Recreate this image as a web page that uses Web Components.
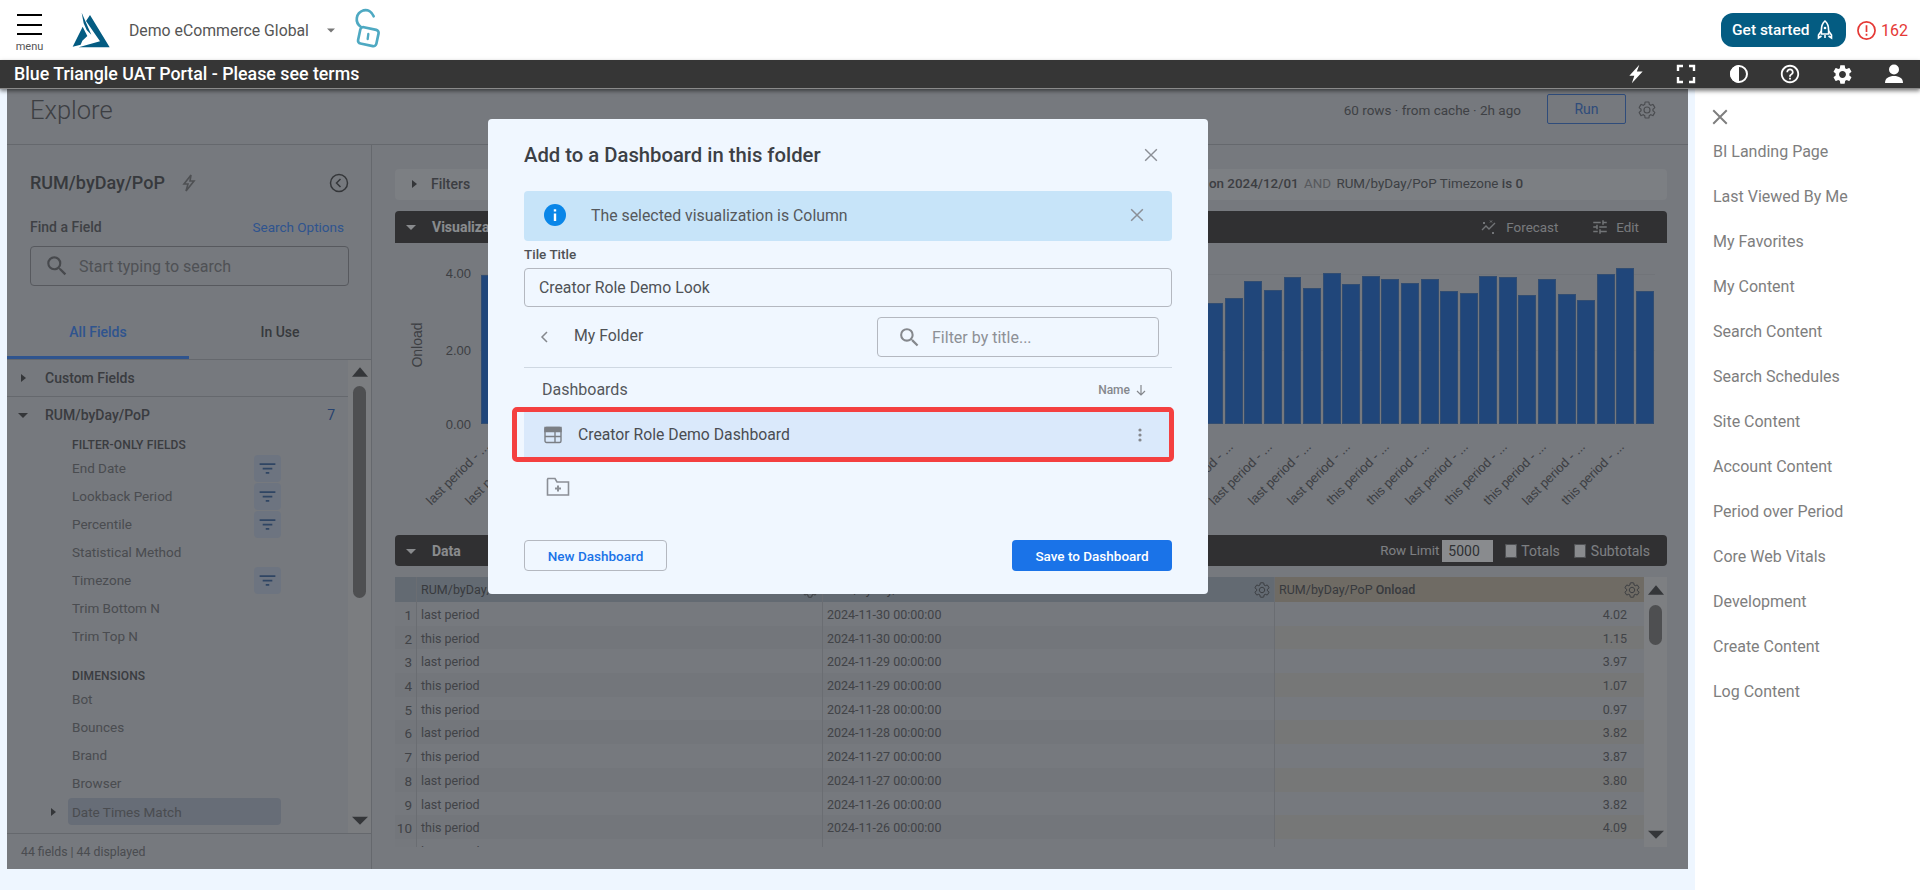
<!DOCTYPE html>
<html lang="en">
<head>
<meta charset="utf-8">
<title>Add to a Dashboard</title>
<style>
html,body{margin:0;padding:0;height:890px;overflow:hidden;background:#eef6ff;font-family:Roboto,"Liberation Sans",sans-serif}
.main{display:flex;height:801px}
</style>
</head>
<body>
<app-header></app-header>
<app-banner></app-banner>
<div class="main">
  <explore-pane></explore-pane>
  <side-nav></side-nav>
</div>
<script>
const P={
 search:'M15.5 14h-.79l-.28-.27A6.47 6.47 0 0 0 16 9.5 6.5 6.5 0 1 0 9.5 16c1.61 0 3.09-.59 4.23-1.57l.27.28v.79l5 4.99L20.49 19l-4.99-5zm-6 0C7.01 14 5 11.99 5 9.5S7.01 5 9.5 5 14 7.01 14 9.5 11.99 14 9.5 14z',
 gear:'M19.14 12.94c.04-.3.06-.61.06-.94 0-.32-.02-.64-.07-.94l2.03-1.58c.18-.14.23-.41.12-.61l-1.92-3.32c-.12-.22-.37-.29-.59-.22l-2.39.96c-.5-.38-1.03-.7-1.62-.94l-.36-2.54c-.04-.24-.24-.41-.48-.41h-3.84c-.24 0-.43.17-.47.41l-.36 2.54c-.59.24-1.13.57-1.62.94l-2.39-.96c-.22-.08-.47 0-.59.22L2.74 8.87c-.12.21-.08.47.12.61l2.03 1.58c-.05.3-.09.63-.09.94s.02.64.07.94l-2.03 1.58c-.18.14-.23.41-.12.61l1.92 3.32c.12.22.37.29.59.22l2.39-.96c.5.38 1.03.7 1.62.94l.36 2.54c.05.24.24.41.48.41h3.84c.24 0 .44-.17.47-.41l.36-2.54c.59-.24 1.13-.56 1.62-.94l2.39.96c.22.08.47 0 .59-.22l1.92-3.32c.12-.22.07-.47-.12-.61l-2.01-1.58zM12 15.6c-1.98 0-3.6-1.62-3.6-3.6s1.62-3.6 3.6-3.6 3.6 1.62 3.6 3.6-1.62 3.6-3.6 3.6z',
 help:'M11 18h2v-2h-2v2zm1-16C6.48 2 2 6.48 2 12s4.48 10 10 10 10-4.48 10-10S17.52 2 12 2zm0 18c-4.41 0-8-3.59-8-8s3.59-8 8-8 8 3.59 8 8-3.59 8-8 8zm0-14c-2.21 0-4 1.79-4 4h2c0-1.1.9-2 2-2s2 .9 2 2c0 2-3 1.75-3 5h2c0-2.25 3-2.5 3-5 0-2.21-1.79-4-4-4z',
 tune:'M3 17v2h6v-2H3zM3 5v2h10V5H3zm10 16v-2h8v-2h-8v-2h-2v6h2zM7 9v2H3v2h4v2h2V9H7zm14 4v-2H11v2h10zm-6-4h2V7h4V5h-4V3h-2v6z',
 filter:'M3 6h18v2H3zM6.5 11h11v2h-11zM10 16h4v2h-4z'
};
const svg=(p,s,c,extra='')=>`<svg width="${s}" height="${s}" viewBox="0 0 24 24" fill="${c}" ${extra}><path d="${p}"/></svg>`;
const stroke=(p,s,c,w=2,extra='')=>`<svg width="${s}" height="${s}" viewBox="0 0 24 24" fill="none" stroke="${c}" stroke-width="${w}" ${extra}><path d="${p}"/></svg>`;
const caret=(dir,c,s=10)=>{
  const d=dir==='r'?'M3 1l5 4-5 4z':dir==='u'?'M0 8L5 2l5 6z':'M0 3h10L5 8z';
  return `<svg width="${s}" height="${s}" viewBox="0 0 10 10" fill="${c}"><path d="${d}"/></svg>`;
};
class Base extends HTMLElement{
  constructor(){super();this.attachShadow({mode:'open'}).innerHTML=`<style>${this.css()}</style>${this.html()}`;}
  css(){return ''}
  html(){return ''}
}

customElements.define('app-header',class extends Base{
 css(){return `:host{display:flex;align-items:center;height:60px;background:#fff;padding:0 12px 0 16px;box-sizing:border-box;font-family:Roboto,sans-serif}
 .burger{width:27px;display:flex;flex-direction:column;align-items:center;margin-top:8px}
 .lines{width:25px;height:21px;border-top:2px solid #000;border-bottom:2px solid #000;box-sizing:border-box}
 .lines i{display:block;height:2px;background:#000;margin-top:7.5px}
 .burger span{font-size:11px;line-height:14px;color:#555;margin-top:5px}
 .logo{margin-left:23px;width:50px;height:48px;display:block}
 .name{font-size:15.800px;color:#555;margin-left:13px;width:198px;white-space:nowrap}
 .lock{margin-left:10px;display:block}
 .right{margin-left:auto;display:flex;align-items:center}
 .btn{height:34px;width:125px;box-sizing:border-box;border-radius:12px;background:#045c82;color:#fff;display:flex;align-items:center;padding-left:11px;gap:8px;font-size:15.500px;font-weight:500}
 .err{margin-left:11px;display:flex;align-items:center;gap:5px;color:#e53935;font-size:16px}`}
 html(){return `<div class="burger"><div class="lines"><i></i></div><span>menu</span></div>
 <svg class="logo" viewBox="0 0 150 144"><path fill="#045c82" d="M20 122L50 62 64 90 49 104 44 116zM60 45L72 27 131 124 38 124 102 106zM47 20L76 86 62 72 53 52z"/></svg>
 <div class="name">Demo eCommerce Global</div>
 ${caret('d','#777',8)}
 <svg class="lock" width="45" height="50" viewBox="0 0 135 150" fill="none" stroke="#4ea9c2" stroke-width="8" stroke-linecap="round"><rect x="42" y="70" width="56" height="50" rx="9" transform="rotate(12 70 95)"/><path d="M48 66C28 52 32 24 56 16c12-3 24 4 30 18"/><path d="M70 87l-2 15" stroke-width="7"/></svg>
 <div class="right"><div class="btn"><span>Get started</span>
 <svg width="16" height="20" viewBox="0 0 16 20" fill="none" stroke="#fff" stroke-width="1.600"><path d="M8 1c3 2.500 3.600 6 3.600 9v4H4.400V10C4.400 7 5 3.500 8 1z"/><path d="M4.400 11L1.500 15v3l3-2M11.600 11l2.900 4v3l-3-2"/><circle cx="8" cy="8" r="1.300" fill="#fff" stroke="none"/><path d="M8 15v3"/></svg></div>
 <div class="err"><svg width="19" height="19" viewBox="0 0 20 20" fill="none" stroke="#e53935" stroke-width="1.800"><circle cx="10" cy="10" r="9"/><path d="M10 4.500v7M10 13.500v2"/></svg><span>162</span></div></div>`}
});

customElements.define('app-banner',class extends Base{
 css(){return `:host{display:flex;align-items:center;height:29px;box-sizing:border-box;background:#363636;color:#fff;position:relative;z-index:3;box-shadow:0 2px 4px rgba(0,0,0,.5);border-bottom:1px solid #8a8a8a;font-family:Roboto,sans-serif}
 .t{font-size:17.800px;font-weight:500;padding-left:14px;white-space:nowrap;margin-top:-1px}
 .i{margin-left:auto;display:flex}.i div{width:52px;display:flex;justify-content:center;align-items:center;height:28px}`}
 html(){return `<div class="t">Blue Triangle UAT Portal - Please see terms</div><div class="i">
 <div><svg width="20" height="20" viewBox="0 0 24 24" fill="#fff" style="margin-left:3px"><path d="M16 1L4 14h6l-3 9 13-14h-7z"/></svg></div>
 <div><svg width="20" height="20" viewBox="0 0 20 20" fill="none" stroke="#fff" stroke-width="2.400"><path d="M7 2H2v5M13 2h5v5M7 18H2v-5M13 18h5v-5"/></svg></div>
 <div><svg width="20" height="20" viewBox="0 0 20 20" style="margin-left:1px"><circle cx="10" cy="10" r="8" fill="#363636" stroke="#fff" stroke-width="2"/><path fill="#fff" d="M10 1a9 9 0 0 0 0 18z"/></svg></div>
 <div>${svg(P.help,22,'#fff')}</div>
 <div>${svg(P.gear,23,'#fff')}</div>
 <div><svg width="20" height="20" viewBox="0 0 20 20" fill="#fff"><circle cx="10" cy="5.500" r="5"/><path d="M1 19c0-5 4-7 9-7s9 2 9 7z"/></svg></div>
 </div>`}
});

customElements.define('side-nav',class extends Base{
 css(){return `:host{display:block;width:225px;background:#fff;margin-left:7px;padding:21px 0 0 18px;box-sizing:border-box;color:#7e7e7e;font-family:Roboto,sans-serif}
 svg{display:block;margin:-2px 0 2.500px -2px}
 div{font-size:16px;line-height:45.050px;white-space:nowrap}`}
 html(){return stroke('M3 3l18 18M21 3L3 21',18,'#7e7e7e',2.600)+['BI Landing Page','Last Viewed By Me','My Favorites','My Content','Search Content','Search Schedules','Site Content','Account Content','Period over Period','Core Web Vitals','Development','Create Content','Log Content'].map(t=>`<div>${t}</div>`).join('')}
});

customElements.define('field-picker',class extends Base{
 css(){return `:host{display:flex;flex-direction:column;width:365px;height:724px;box-sizing:border-box;border-right:1px solid #b6b8bc;color:#646466;font-family:Roboto,sans-serif;flex:none}
 .top{padding:25px 23px 0}
 .title{display:flex;align-items:center;font-size:18px;font-weight:500;line-height:26px;color:#5a5a5c}
 .title svg:first-of-type{margin-left:17px}.title svg:last-of-type{margin-left:auto;margin-right:-1px}
 .find{display:flex;justify-content:space-between;font-size:14px;line-height:18px;margin-top:22px;font-weight:500;color:#6a6a6c}
 .find a{color:#4a90ff;font-weight:400;margin-right:4px;font-size:13.500px}
 .sb{box-sizing:border-box;height:40px;width:319px;border:1px solid #9a9a9e;border-radius:4px;margin-top:10px;display:flex;align-items:center;padding-left:13px;gap:9px;font-size:16px;color:#8a8a8c}
 .tabs{display:flex;height:53px;margin-top:20px;border-bottom:1px solid #b6b8bc;font-size:14px;font-weight:500;text-align:center;line-height:52px}
 .tabs div{width:182px;box-sizing:border-box;height:53px}
 .tabs .on{color:#4a90ff;border-bottom:3px solid #4a90ff}
 .tabs .off{color:#5a5a5c}
 .mid{flex:1;min-height:0;display:flex}
 .list{flex:1;overflow:hidden;font-size:13.500px;color:#808082}
 .grp{display:flex;align-items:center;font-weight:500;font-size:14px;color:#606062;position:relative;padding-left:38px}
 .grp svg{position:absolute;left:11px}
 .g1{height:36px;border-bottom:1px solid #b6b8bc}
 .g2{height:36px}
 .g2 b{margin-left:auto;margin-right:13px;color:#3a6cc0;font-weight:400}
 .lab{margin-left:65px;font-size:12px;font-weight:500;line-height:18px;color:#606062;letter-spacing:.15px;display:flex;align-items:flex-end}
 .row{margin-left:61px;width:213px;height:28px;display:flex;align-items:center;justify-content:space-between;padding-left:4px;box-sizing:border-box;position:relative;border-radius:4px}
 .row.hl{height:27px;background:#bac2d0;margin-top:1px}
 .row.hl svg{position:absolute;left:-20px}
 .fb{width:27px;height:27px;border-radius:4px;background:#c6d0e2;display:flex;align-items:center;justify-content:center}
 .sc{width:23px;background:#e2e2e2;display:flex;flex-direction:column;align-items:center}
 .sc .th{width:13px;height:212px;background:#888684;border-radius:7px;margin-top:12px}
 .sc .u{margin-top:4px;height:10px}.sc .d{margin-top:auto;margin-bottom:11px;height:10px}
 .foot{height:36px;border-top:1px solid #b6b8bc;font-size:12.300px;display:flex;align-items:center;padding-left:14px;box-sizing:border-box;color:#808082}`}
 html(){
  const fb=`<div class="fb">${svg(P.filter,21,'#4a72a8')}</div>`;
  const r=(t,f)=>`<div class="row"><span>${t}</span>${f?fb:''}</div>`;
  return `<div class="top"><div class="title"><span>RUM/byDay/PoP</span>
  <svg width="14" height="18" viewBox="0 0 14 18" fill="none" stroke="#888" stroke-width="1.600"><path d="M9 1L2 10h4l-2 7 8-10H8z"/></svg>
  <svg width="20" height="20" viewBox="0 0 20 20" fill="none" stroke="#555" stroke-width="1.500"><circle cx="10" cy="10" r="8.500"/><path d="M11.500 6l-4 4 4 4"/></svg></div>
  <div class="find"><span>Find a Field</span><a>Search Options</a></div>
  <div class="sb">${svg(P.search,26,'#7a7a7c')}<span>Start typing to search</span></div></div>
  <div class="tabs"><div class="on">All Fields</div><div class="off">In Use</div></div>
  <div class="mid"><div class="list">
   <div class="grp g1">${caret('r','#555')}Custom Fields</div>
   <div class="grp g2">${caret('d','#555')}RUM/byDay/PoP<b>7</b></div>
   <div class="lab" style="height:21px">FILTER-ONLY FIELDS</div>
   ${r('End Date',1)}${r('Lookback Period',1)}${r('Percentile',1)}${r('Statistical Method')}${r('Timezone',1)}${r('Trim Bottom N')}${r('Trim Top N')}
   <div class="lab" style="height:35px">DIMENSIONS</div>
   ${r('Bot')}${r('Bounces')}${r('Brand')}${r('Browser')}
   <div class="row hl">${caret('r','#555')}<span>Date Times Match</span></div>
  </div>
  <div class="sc"><div class="u">${caret('u','#555',16)}</div><div class="th"></div><div class="d">${caret('d','#555',16)}</div></div></div>
  <div class="foot">44 fields | 44 displayed</div>`}
});

customElements.define('viz-panel',class extends Base{
 css(){return `:host{display:block;height:324px;font-family:Roboto,sans-serif}
 .bar{height:32px;background:#4c4846;border-radius:4px 4px 0 0;display:flex;align-items:center;color:#e6e6e6;font-size:14px;padding-left:11px}
 .bar b{font-weight:700;margin-left:16px;color:#fff}
 .act{margin-left:auto;display:flex;align-items:center;margin-right:28px;color:#dcdcdc;font-size:13.400px}
 .act svg{margin-right:7px}.act span+svg{margin-left:33px}
 .chart{display:flex;padding-top:31px;font-family:"Liberation Sans",sans-serif;color:#666668;font-size:13px}
 .yl{width:43px;height:141px;display:flex;align-items:center;justify-content:center;font-size:14px}
 .yl span{transform:rotate(-90deg);display:block}
 .ticks{width:33px;height:167px;margin-top:-8px;margin-right:9px;display:flex;flex-direction:column;justify-content:space-between;align-items:flex-end;line-height:16px}
 .ticks span:nth-child(2){margin-top:2px}
 .area{width:1175px}
 .plot{height:149px;display:flex;align-items:flex-end;border-top:1px solid #cfd1d5;background:linear-gradient(#cfd1d5,#cfd1d5) 0 75px/100% 1px no-repeat}
 .plot i{flex:1;margin:0 .8px;background:#2c74d6;box-shadow:inset 0 0 0 1px #5182c4;display:block}
 .xa{display:flex;margin:15px 0 0 -38px}
 .xa div{flex:none;width:39.160px;display:flex;justify-content:flex-end;height:20px}
 .xa span{flex:none;white-space:nowrap;transform-origin:100% 0;transform:rotate(-45deg)}`}
 html(){
  const tops=[290,267.3,273,299,293.3,277.7,294.3,276.3,275.3,292,290,277.7,282,277.7,275.3,283.3,272,286.7,276.3,289,280,296.7,302.3].reverse();
  const h=[];for(let i=0;i<60;i++){h.push(i===0?149:i<37?118:423-tops[i-37]);}
  const labs=['last','last','this','last','this','last','this','last','this','this','last','this','last','this','last','this','last','this','last','last','last','last','last','this','this','last','this','this','last','this'];
  return `<div class="bar">${caret('d','#fff')}<b>Visualization</b>
  <div class="act"><svg width="16" height="16" viewBox="0 0 16 16" fill="none" stroke="#d0d0d0" stroke-width="1.400" style="margin-right:9px"><path d="M1 11l4-4 3 3 6-6"/><path d="M2 3l2 2M4 3L2 5M9 1.500l2 2M11 1.500l-2 2M11 13l2 2M13 13l-2 2" stroke-width="1"/></svg><span>Forecast</span>${svg(P.tune,18,'#d0d0d0')}<span>Edit</span></div></div>
  <div class="chart"><div class="yl"><span>Onload</span></div><div class="ticks"><span>4.00</span><span>2.00</span><span>0.00</span></div>
  <div class="area"><div class="plot">${h.map(v=>`<i style="height:${v}px"></i>`).join('')}</div>
  <div class="xa">${labs.map(l=>`<div><span>${l} period - ...</span></div>`).join('')}</div></div></div>`}
});

customElements.define('data-panel',class extends Base{
 css(){return `:host{display:block;font-family:Roboto,sans-serif}
 .bar{height:31px;background:#4c4846;border-radius:4px;display:flex;align-items:center;color:#e6e6e6;font-size:14px;padding-left:11px}
 .bar b{font-weight:700;margin-left:16px;color:#fff}
 .act{margin-left:auto;display:flex;align-items:center;margin-right:17px}
 .rl{font-size:13.400px}
 .inp{width:51px;height:22px;background:#fff;color:#4a4a4a;margin:0 12px 0 3px;padding-left:6px;box-sizing:border-box;line-height:22px}
 .cb{width:12px;height:14px;border-radius:2px;background:#fff;margin-right:5px;box-shadow:inset 0 0 0 1px #888}
 .inp+.cb{margin-right:4px}
 .act span+.cb{margin-left:14px}
 .tbl{display:flex;margin-top:11px;height:270px;overflow:hidden}
 .t{width:1249px;font-size:12.500px;color:#6e6e70}
 .r{display:grid;grid-template-columns:22px 406px 452px 369px;height:23.700px;align-items:center}
 .r div{height:100%;line-height:26.700px;box-sizing:border-box;padding-left:4px;border-right:1px solid #c0c2c6;white-space:nowrap;overflow:hidden}
 .r div:first-child{text-align:right;padding:0 4px 0 0;font-size:13.500px;background:#d6d8dc}
 .r div:last-child{text-align:right;padding-right:17px;border:0}
 .r:nth-child(odd) div{background:#d2d4d8}
 .r:nth-child(odd) div:first-child{background:#d3d5d9}
 .r:nth-child(odd) div:last-child{background:#d9d6d1}
 .h{height:25px}
 .h div,.r.h:nth-child(odd) div{background:#b2bcc6;line-height:25px;position:relative;color:#5c5c5e;border-right:1px solid #c0c2c6}
 .h div:last-child,.r.h:nth-child(odd) div:last-child{background:#cabeaa;text-align:left;padding-left:4px;border:0}
 .h svg{position:absolute;right:3px;top:4px}
 .h b{font-weight:500}
 .sc{width:23px;background:#e6e6e6;display:flex;flex-direction:column;align-items:center;height:270px}
 .sc .u{margin-top:5px;height:16px}.sc .th{width:13px;height:40px;border-radius:7px;background:#888684;margin-top:7px}.sc .d{margin-top:auto;margin-bottom:5px;height:16px}`}
 html(){
  const g=stroke(P.gear,18,'#606062',1.300);
  const rows=[['last','11-30','4.02'],['this','11-30','1.15'],['last','11-29','3.97'],['this','11-29','1.07'],['this','11-28','0.97'],['last','11-28','3.82'],['this','11-27','3.87'],['last','11-27','3.80'],['last','11-26','3.82'],['this','11-26','4.09'],['last','11-25','3.97']];
  return `<div class="bar">${caret('d','#fff')}<b>Data</b><div class="act"><span class="rl">Row Limit</span><div class="inp">5000</div><div class="cb"></div><span>Totals</span><div class="cb"></div><span>Subtotals</span></div></div>
  <div class="tbl"><div class="t"><div class="r h"><div></div><div>RUM/byDay/PoP Period${g}</div><div>RUM/byDay/PoP Date Time${g}</div><div>RUM/byDay/PoP <b>Onload</b>${g}</div></div>
  ${rows.map((r,i)=>`<div class="r"><div>${i+1}</div><div>${r[0]} period</div><div>2024-${r[1]} 00:00:00</div><div>${r[2]}</div></div>`).join('')}</div>
  <div class="sc"><div class="u">${caret('u','#555',16)}</div><div class="th"></div><div class="d">${caret('d','#555',16)}</div></div></div>`}
});

customElements.define('add-dialog',class extends Base{
 css(){return `:host{display:flex;flex-direction:column;position:absolute;left:481px;top:30px;width:720px;height:475px;box-sizing:border-box;padding:0 36px 23px;background:#f0f7ff;border-radius:4px;color:#4a4d52;font-family:Roboto,sans-serif;z-index:2}
 .title{height:72px;flex:none;display:flex;align-items:center;justify-content:space-between;font-size:20.250px;font-weight:500;color:#3c4045;line-height:24px}
 .title svg{margin-right:11px}
 .info{height:50px;flex:none;box-sizing:border-box;padding:0 0 2px 20px;background:#c7e4f9;border-radius:4px;display:flex;align-items:center;font-size:15.850px;color:#55585c}
 .info span{margin-left:25px}.info svg:last-child{margin-left:auto;margin-right:25px}
 .lbl{font-size:13.500px;font-weight:500;line-height:16px;margin-top:5px;color:#4f5256}
 .in{height:39px;flex:none;box-sizing:border-box;border:1px solid #b4b8c0;border-radius:4px;margin-top:6px;padding-left:14px;display:flex;align-items:center;font-size:15.800px;color:#4f5256}
 .fr{height:61px;flex:none;box-sizing:border-box;border-bottom:1px solid #cfd8e2;display:flex;align-items:flex-start;font-size:16px}
 .fr .back{margin:21px 0 0 15px}.fr .n{margin:19px 0 0 25px;line-height:20px;color:#4f5256;font-size:15.800px}
 .flt{margin:10px 13px 0 auto;width:282px;height:40px;box-sizing:border-box;border:1px solid #b4b8c0;border-radius:4px;display:flex;align-items:center;padding-left:19px;gap:10px;color:#8d9096}
 .dh{height:39px;flex:none;display:flex;align-items:center;justify-content:space-between;padding:4px 25px 0 18px;box-sizing:border-box;font-size:16px;color:#55585c}
 .dh small{font-size:12px;font-weight:500;color:#85888d;display:flex;align-items:center;gap:5px}
 .item{position:relative;height:45px;flex:none;margin-top:5px;background:#dae9fb;display:flex;align-items:center;font-size:15.750px;padding-left:20px;color:#4a4d52}
 .item span{margin-left:16px}.item .k{margin-left:auto;margin-right:30px}
 .red{position:absolute;inset:-5px -2px -5px -12px;border:5px solid #f44040;border-radius:5px}
 .nf{margin:20px 0 0 22px;flex:none}
 .ft{margin-top:auto;display:flex;justify-content:space-between}
 .b{height:31px;border-radius:4px;box-sizing:border-box;font-size:13.500px;font-weight:500;display:flex;align-items:center;justify-content:center}
 .b1{width:143px;border:1px solid #b4b8c0;color:#1a73e8}
 .b2{width:160px;background:#1a73e8;color:#fff}`}
 html(){return `<div class="title"><span>Add to a Dashboard in this folder</span>${stroke('M5 5l14 14M19 5L5 19',20,'#8b8f96',1.700)}</div>
 <div class="info"><svg width="22" height="22" viewBox="0 0 22 22"><circle cx="11" cy="11" r="11" fill="#0a86e8"/><path d="M9.800 9.500h2.400v7.500H9.800zM9.800 5.200h2.400v2.400H9.800z" fill="#fff"/></svg><span>The selected visualization is Column</span>${stroke('M5 5l14 14M19 5L5 19',20,'#8b8f96',1.800)}</div>
 <div class="lbl">Tile Title</div>
 <div class="in">Creator Role Demo Look</div>
 <div class="fr"><svg class="back" width="10" height="18" viewBox="0 0 10 18" fill="none" stroke="#85888d" stroke-width="1.500"><path d="M8 4L3 9l5 5"/></svg><div class="n">My Folder</div>
 <div class="flt">${svg(P.search,25,'#85888d')}<span>Filter by title...</span></div></div>
 <div class="dh"><span>Dashboards</span><small>Name <svg width="12" height="12" viewBox="0 0 12 12" fill="none" stroke="#85888d" stroke-width="1.200"><path d="M6 1v9.500M2 7l4 4 4-4"/></svg></small></div>
 <div class="item"><svg width="18" height="18" viewBox="0 0 18 18" fill="none" stroke="#7b7f85" stroke-width="1.400"><rect x="1" y="1.500" width="16" height="15" rx="1.500"/><path fill="#7b7f85" d="M1 1.500h16v4H1z"/><path d="M1 10.500h16M11 5.500v11"/></svg><span>Creator Role Demo Dashboard</span>
 <svg class="k" width="4" height="14" viewBox="0 0 4 14" fill="#85888d"><circle cx="2" cy="2" r="1.600"/><circle cx="2" cy="7" r="1.600"/><circle cx="2" cy="12" r="1.600"/></svg><div class="red"></div></div>
 <svg class="nf" width="24" height="20" viewBox="0 0 24 20" fill="none" stroke="#8b8f96" stroke-width="1.600"><path d="M1.500 2.500v15.500h21V5H11L9 1.500H2z"/><path d="M12 8.500v6M9 11.500h6" stroke-width="2"/></svg>
 <div class="ft"><div class="b b1">New Dashboard</div><div class="b b2">Save to Dashboard</div></div>`}
});

customElements.define('explore-pane',class extends Base{
 css(){return `:host{display:block;position:relative;width:1681px;height:780px;margin-left:7px;background:#d8dade;overflow:hidden;color:#666668;font-family:Roboto,sans-serif;flex:none}
 .head{height:56px;box-sizing:border-box;border-bottom:1px solid #b6b8bc;display:flex;align-items:flex-start;padding:5px 31px 0 23px}
 .head h1{margin:0;font-size:25.500px;font-weight:300;line-height:32px;color:#666668}
 .meta{margin-left:auto;font-size:13.500px;line-height:32px;color:#6a6a6c;position:relative;left:1px}
 .run{width:79px;height:30px;box-sizing:border-box;border:1px solid #4a80d8;border-radius:2px;color:#4a80d8;font-size:14px;text-align:center;line-height:28px;margin:0 11px 0 27px}
 .gear{margin-top:6px;display:block}
 .body{display:flex}
 .content{flex:1;padding:24px 21px 0 23px;min-width:0}
 .filters{height:31px;box-sizing:border-box;background:#e4e6e8;border-radius:4px;display:flex;align-items:center;font-size:13.400px;padding:0 144px 2px 14px;margin-bottom:11px;white-space:nowrap}
 .filters b{font-weight:500;color:#646466}.filters .ft{margin-left:12px;font-size:14px}.filters .ri{margin-left:auto}
 .filters i{font-style:normal;color:#9a9a9c;margin:0 2px}
 .scrim{position:absolute;inset:0;background:rgba(20,24,30,.5);z-index:1}`}
 html(){return `<div class="head"><h1>Explore</h1><div class="meta">60 rows · from cache · 2h ago</div><div class="run">Run</div>${stroke(P.gear,20,'#808082',1.400,'class="gear"')}</div>
 <div class="body"><field-picker></field-picker><div class="content">
 <div class="filters">${caret('r','#555')}<b class="ft">Filters</b><span class="ri"><b>on 2024/12/01</b> <i>AND</i> RUM/byDay/PoP Timezone <b>is 0</b></span></div>
 <viz-panel></viz-panel><data-panel></data-panel></div></div>
 <div class="scrim"></div><add-dialog></add-dialog>`}
});
</script>
</body>
</html>
